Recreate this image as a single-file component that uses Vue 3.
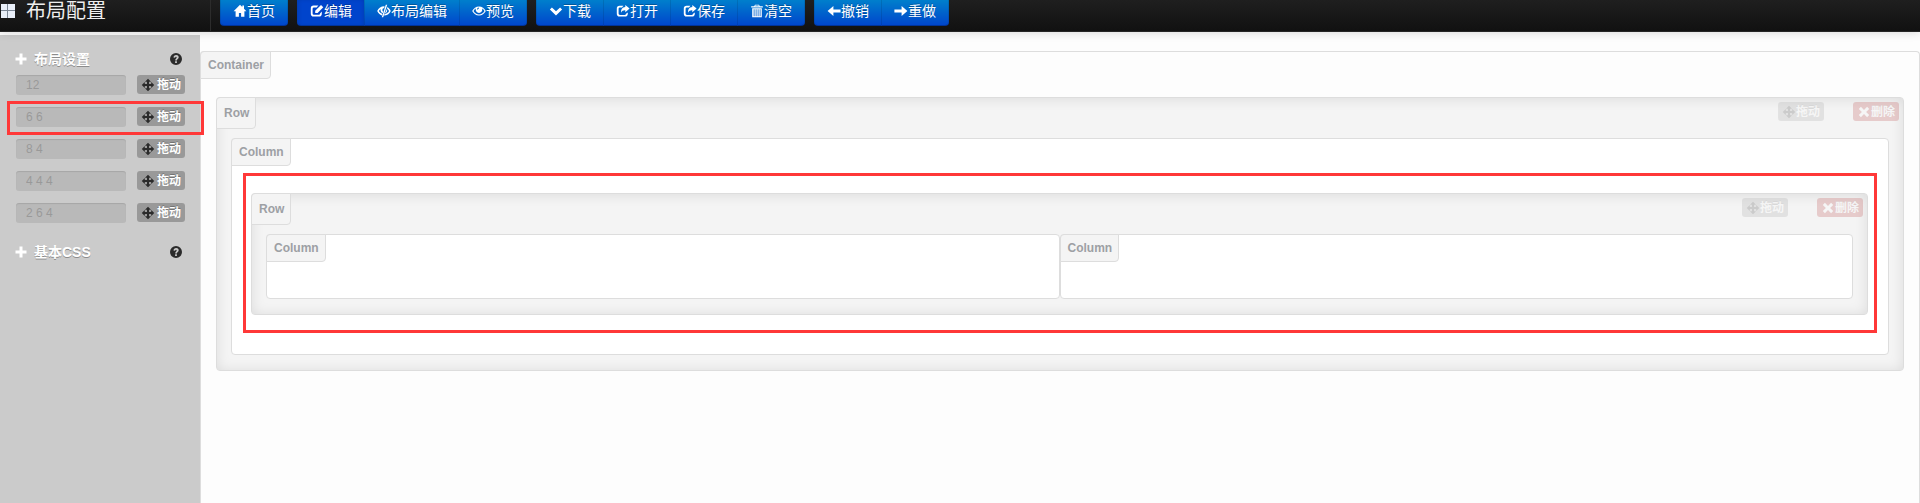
<script setup>
import { h } from 'vue'

const shapes = {
  home: ['M7 .8 .6 7.2h2v5.6h3.3V9h2.2v3.8h3.3V7.2h2L11 4.8V1.6H9.3v1.5z'],
  edit: ['M8.4 1.6H3.6A2.8 2.8 0 0 0 .8 4.4v5.4a2.8 2.8 0 0 0 2.8 2.8H9a2.8 2.8 0 0 0 2.8-2.8V7.6L10 9.4a1.3 1.3 0 0 1-1.3 1.4H4a1.4 1.4 0 0 1-1.4-1.4V4.8A1.4 1.4 0 0 1 4 3.4h2.6z', 'M11 1 13.3 3.3 7.6 9H5.2V6.7z'],
  code: ['M7.6 2.2C4.400 2 1.600 4 .2 7c1 2.100 2.600 3.700 4.700 4.400L5.400 9.900C3.900 9.300 2.700 8.300 1.900 7c.4-.8 1-1.500 1.700-2C3.200 6.700 4 8.500 5.700 9.200L6.200 7.600C5.500 7 5.300 6.200 5.500 5.400 5.700 4.500 6.300 4.100 7.200 4z', 'M8.800.8h1.400L6.200 13.200H4.800z', 'M10.300 2.900c1.500.9 2.700 2.300 3.500 4.100-1.400 2.900-3.900 4.600-6.800 4.600l.6-1.600C9.500 9.800 11.100 8.700 12.100 7c-.5-.9-1.200-1.600-2-2.200zM9.800 4.900c1 2-.1 3.900-1.900 4.500z'],
  eye: ['M7 2.400C4 2.400 1.600 4.300.2 7 1.600 9.700 4 11.500 7 11.500S12.400 9.700 13.800 7C12.400 4.300 10 2.400 7 2.400zM7 10.400C4.700 10.400 2.800 9.200 1.500 7c.6-1 1.400-1.900 2.400-2.500a3.300 3.300 0 1 0 6.200 0c1 .6 1.800 1.500 2.400 2.500C11.200 9.200 9.300 10.400 7 10.400zM7 3.400A2 2 0 0 0 5 5.400h1A1 1 0 0 1 7 4.400z'],
  down: ['M2.900 3.400 7 7.300l4.100-3.900 2 2L7 11.400.9 5.400z'],
  share: ['M7.400 1.800H3.600A2.800 2.800 0 0 0 .8 4.600v5.200a2.800 2.800 0 0 0 2.800 2.800H9a2.800 2.800 0 0 0 2.800-2.800V8.600L10 9.800c0 .7-.5 1.200-1.200 1.200H4c-.8 0-1.400-.6-1.400-1.400V5C2.600 4.200 3.200 3.600 4 3.600h2z', 'M9.300.9 13.600 4.500 9.300 8.200V6.200C7.200 6.100 6 6.800 5 8.700c-.1-3.200 1.300-5.600 4.300-5.800z'],
  trash: ['M5 .8h4l.8 1.400h3v1.400H1.200V2.200h3zM5.500 1.600l-.3.600h3.600l-.3-.6z', 'M2.200 4.300h9.600v8.900H2.200zm1.500 1v6.900h.8V5.300zm2 0v6.900h.8V5.300zm2 0v6.900h.8V5.300zm2 0v6.900h.8V5.300z'],
  left: ['M6.400 2 .6 7l5.800 5V8.600h7.200V5.400H6.400z'],
  right: ['M7.600 2l5.800 5-5.800 5V8.600H.4V5.400h7.200z'],
  plus: ['M5.500 1.500h3v4h4v3h-4v4h-3v-4h-4v-3h4z'],
  move: ['M7 .8l3 3H8v2.200h2.200V4l3 3-3 3V8H8v2.200h2l-3 3-3-3h2V8H3.800v2l-3-3 3-3v2H6V3.800H4z'],
  remove: ['M3.900 1.800 7 4.900l3.100-3.100 2.100 2.100L9.100 7l3.100 3.100-2.100 2.100L7 9.100l-3.100 3.100-2.100-2.100L4.900 7 1.800 3.900z'],
  help: ['M7 1a6 6 0 1 0 0 12A6 6 0 0 0 7 1zM6.100 9.200h1.800v1.700H6.100zM4.500 5.500C4.600 3.900 5.600 3 7.100 3c1.500 0 2.600.8 2.600 2.200 0 1.700-1.700 1.800-1.800 3.200H6.200c0-1.900 1.500-2.100 1.500-3 0-.5-.3-.7-.7-.7-.5 0-.8.300-.9 1z']
}

const Icon = (props) =>
  h('svg', { viewBox: '0 0 14 14', width: 14, height: 14, 'aria-hidden': 'true' },
    shapes[props.name].map((d) => h('path', { d, fill: 'currentColor', 'fill-rule': 'evenodd' })))
Icon.props = ['name']

const groups = [
  [{ icon: 'home', text: '首页' }],
  [{ icon: 'edit', text: '编辑', active: true }, { icon: 'code', text: '布局编辑' }, { icon: 'eye', text: '预览' }],
  [{ icon: 'down', text: '下载' }, { icon: 'share', text: '打开' }, { icon: 'share', text: '保存' }, { icon: 'trash', text: '清空' }],
  [{ icon: 'left', text: '撤销' }, { icon: 'right', text: '重做' }]
]
const layouts = ['12', '6 6', '8 4', '4 4 4', '2 6 4']
const marked = '6 6'
</script>

<template>
  <div class="page">
    <header class="navbar">
      <a class="brand" href="#">
        <svg class="logo" viewBox="0 0 16 16" width="16" height="16" aria-hidden="true">
          <path d="M1 1h14v14H1z" fill="#7c8795" />
          <path d="M1 1h6v6H1zM8 1h7v6H8zM1 8h6v7H1zM8 8h7v7H8z" fill="#e9eff8" />
        </svg>
        <span>布局配置</span>
      </a>
      <nav class="tools">
        <div v-for="(group, i) in groups" :key="i" class="group">
          <button v-for="b in group" :key="b.text" type="button" class="tool" :class="{ active: b.active }">
            <Icon :name="b.icon" />{{ b.text }}
          </button>
        </div>
      </nav>
    </header>

    <div class="body">
      <aside class="sidebar">
        <section class="section">
          <h2 class="title">
            <Icon name="plus" /><a href="#">布局设置</a>
            <button type="button" class="help" aria-label="帮助"><Icon name="help" /></button>
          </h2>
          <ul class="presets">
            <li v-for="item in layouts" :key="item" class="preset" :class="{ marked: item === marked }">
              <input class="columns" type="text" :value="item" aria-label="列宽" />
              <button type="button" class="chip"><Icon name="move" />拖动</button>
            </li>
          </ul>
        </section>
        <section class="section">
          <h2 class="title">
            <Icon name="plus" /><a href="#">基本CSS</a>
            <button type="button" class="help" aria-label="帮助"><Icon name="help" /></button>
          </h2>
        </section>
      </aside>

      <main class="canvas">
        <span class="tag">Container</span>
        <div class="row outer">
          <div class="bar">
            <span class="tag tall">Row</span>
            <button type="button" class="chip faded"><Icon name="move" />拖动</button>
            <button type="button" class="chip faded danger"><Icon name="remove" />删除</button>
          </div>
          <div class="column wide">
            <span class="tag">Column</span>
            <div class="highlight">
              <div class="row">
                <div class="bar">
                  <span class="tag tall">Row</span>
                  <button type="button" class="chip faded"><Icon name="move" />拖动</button>
                  <button type="button" class="chip faded danger"><Icon name="remove" />删除</button>
                </div>
                <div class="pair">
                  <div v-for="n in 2" :key="n" class="column"><span class="tag">Column</span></div>
                </div>
              </div>
            </div>
          </div>
        </div>
      </main>
    </div>
  </div>
</template>

<style>
body {
  margin: 0;
  background: #fdfdfd;
}
</style>

<style scoped>
.page {
  display: flex;
  flex-direction: column;
  min-height: 100vh;
  font-family: "Liberation Sans", "Noto Sans CJK SC", sans-serif;
  font-size: 14px;
  line-height: 20px;
  color: #333;
}
.page * {
  box-sizing: border-box;
}
button,
input {
  margin: 0;
  font-family: inherit;
}
svg {
  flex: none;
}
.navbar {
  position: relative;
  display: flex;
  height: 32px;
  background: linear-gradient(#1f1f1f, #111);
  border-bottom: 1px solid #252525;
  box-shadow: 0 1px 10px rgba(0, 0, 0, 0.14);
}
.brand {
  display: flex;
  align-items: center;
  gap: 10px;
  width: 211px;
  padding-bottom: 9px;
  border-right: 1px solid #2c2c2c;
  color: #eee;
  font-size: 20px;
  text-decoration: none;
}
.tools {
  display: flex;
  align-items: flex-end;
  gap: 9px;
  padding: 0 9px 5px;
}
.group {
  display: flex;
}
.tool {
  display: flex;
  align-items: center;
  height: 30px;
  padding: 0 12px;
  border: 1px solid rgba(0, 0, 0, 0.1);
  border-bottom-color: rgba(0, 0, 0, 0.25);
  background: linear-gradient(#08c, #04c) border-box;
  color: #fff;
  font-size: 14px;
  line-height: 20px;
  text-shadow: 0 -1px 0 rgba(0, 0, 0, 0.25);
}
.tool + .tool {
  margin-left: -1px;
}
.tool:first-child {
  border-radius: 4px 0 0 4px;
}
.tool:last-child {
  border-radius: 0 4px 4px 0;
}
.tool:only-child {
  border-radius: 4px;
}
.tool.active {
  background: #04c;
  box-shadow: inset 0 2px 4px rgba(0, 0, 0, 0.15);
}
.body {
  display: flex;
  flex: 1;
}
.sidebar {
  flex: none;
  width: 200px;
  margin-top: 3px;
  padding: 14px 15px 0 16px;
  background: #cbcbcb;
}
.section {
  margin-bottom: 19px;
}
.title {
  display: flex;
  align-items: center;
  height: 20px;
  margin: 0 0 6px;
  color: #fff;
  font-size: 14px;
  font-weight: 700;
}
.title > svg {
  margin: 0 6px 0 -2px;
}
.title a {
  color: #fff;
  text-decoration: none;
  text-shadow: 0 1px 0 #8c8c8c;
}
.help {
  display: flex;
  margin-left: auto;
  padding: 0 2px 0 0;
  border: 0;
  background: none;
  color: #2b2b2b;
}
.presets {
  display: grid;
  grid-template-columns: minmax(0, 1fr);
  gap: 12px;
  margin: 0;
  padding: 0;
  list-style: none;
}
.preset {
  position: relative;
  display: flex;
  gap: 11px;
}
.marked::after {
  content: "";
  position: absolute;
  inset: -6px -19px -8px -9px;
  border: 3px solid #ff3838;
  pointer-events: none;
}
.columns {
  flex: 1;
  width: 0;
  min-width: 0;
  height: 20px;
  padding: 0 10px;
  border: 0;
  border-radius: 3px;
  background: #b9b9b9;
  box-shadow: inset 0 1px 1px rgba(0, 0, 0, 0.1);
  color: #999;
  font-size: 12px;
}
.chip {
  display: flex;
  align-items: center;
  height: 19px;
  padding: 0 4px;
  border: 0;
  border-radius: 3px;
  background: #999;
  color: #fff;
  font-size: 12px;
  font-weight: 700;
  line-height: 14px;
  text-shadow: 0 -1px 0 rgba(0, 0, 0, 0.25);
  white-space: nowrap;
}
.chip svg {
  color: #2b2b2b;
}
.preset .chip {
  gap: 2px;
}
.canvas {
  flex: 1;
  min-width: 0;
  margin-top: 19px;
  border: 1px solid #ddd;
  border-bottom: 0;
  border-radius: 4px 4px 0 0;
  background: #fdfdfd;
}
.tag {
  display: block;
  width: max-content;
  height: 28px;
  margin: -1px 0 0 -1px;
  padding: 0 6px 0 7px;
  border: 1px solid #ddd;
  border-radius: 4px 0;
  background: #f4f4f4;
  color: #9da0a4;
  font-size: 12px;
  font-weight: 700;
  line-height: 26px;
}
.tag.tall {
  height: 32px;
  margin-right: auto;
  line-height: 30px;
}
.row {
  padding: 0 14px 15px;
  border: 1px solid #ddd;
  border-radius: 4px;
  background: #f4f4f4;
  box-shadow: inset 0 1px 13px rgba(0, 0, 0, 0.1);
}
.outer {
  margin: 18px 15px 0;
}
.bar {
  display: flex;
  gap: 29px;
  margin: 0 -10px 9px -14px;
}
.bar .chip {
  margin-top: 4px;
}
.faded {
  opacity: 0.2;
}
.danger {
  background: #b22b2b;
}
.danger svg {
  color: #fff;
}
.column {
  min-height: 65px;
  border: 1px solid #ddd;
  border-radius: 4px;
  background: #fff;
}
.wide {
  padding-bottom: 21px;
}
.highlight {
  margin: 7px 11px 0 11px;
  padding: 17px 6px 15px 5px;
  border: 3px solid #ff3838;
}
.pair {
  display: grid;
  grid-template-columns: 1fr 1fr;
}
</style>
